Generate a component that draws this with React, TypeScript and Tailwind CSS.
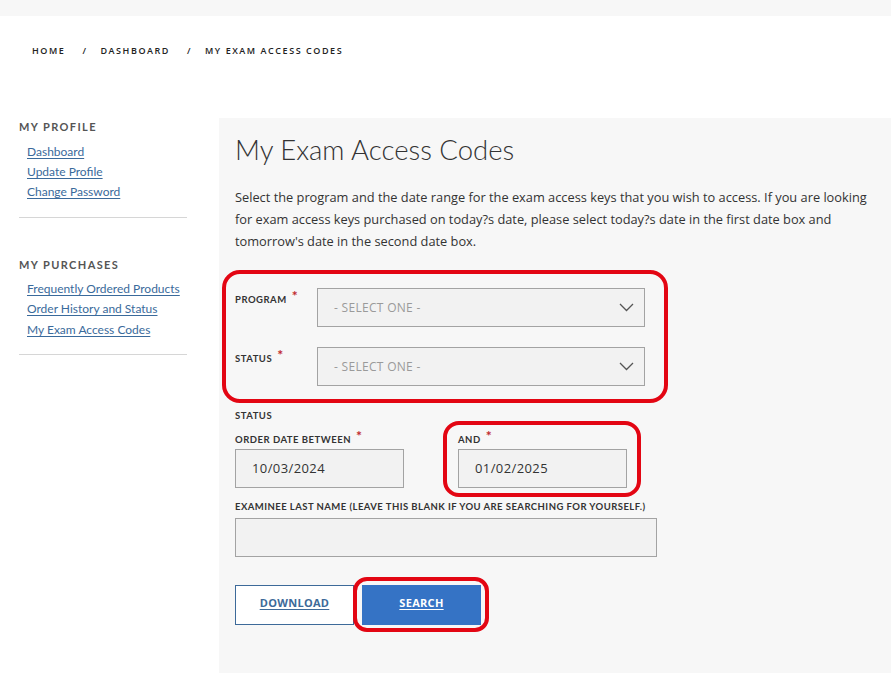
import React from "react";

const Chevron = () => (
  <svg width="15" height="9" viewBox="0 0 15 9" fill="none" className="shrink-0">
    <polyline points="1,1 7.5,7.5 14,1" stroke="#555" strokeWidth="1.3" fill="none" />
  </svg>
);

const Req = () => <span className="ml-[5px] relative -top-[2px] text-[14px] text-[#c0282d]">*</span>;

const Label = ({ children, req }: { children: React.ReactNode; req?: boolean }) => (
  <div className="h-[14px] leading-[14px] text-[9.5px] font-bold tracking-[0.5px] text-[#333] whitespace-nowrap" style={{ fontFamily: "Lato, sans-serif" }}>
    {children}
    {req && <Req />}
  </div>
);

const SelectBox = () => (
  <div className="w-[328px] h-[39px] bg-[#f2f2f2] border border-[#a3a3a3] flex items-center justify-between pl-[16px] pr-[10px]">
    <span className="text-[12px] tracking-[0.3px] text-[#9a9a9a]" style={{ fontFamily: '"Open Sans", sans-serif' }}>- SELECT ONE -</span>
    <Chevron />
  </div>
);

const DateBox = ({ value }: { value: string }) => (
  <div className="w-[169px] h-[39px] bg-[#f2f2f2] border border-[#a3a3a3] flex items-center pl-[16px]">
    <span className="text-[13px] tracking-[0.4px] text-[#333]" style={{ fontFamily: '"Open Sans", sans-serif' }}>{value}</span>
  </div>
);

const SideLink = ({ children }: { children: React.ReactNode }) => (
  <a href="#" className="block h-[20px] leading-[20px] text-[12px] text-[#3a6a9b] underline underline-offset-2">{children}</a>
);

export default function App() {
  return (
    <div className="min-h-[693px] bg-white" style={{ fontFamily: '"Open Sans", sans-serif' }}>
      <div className="h-[16px] bg-[#f7f7f7]" />
      <div className="h-[102px] pt-[28px] pl-[32px]">
        <div className="flex items-center h-[14px] text-[9px] font-semibold tracking-[1.55px] text-[#222]" style={{ fontFamily: '"Open Sans", sans-serif' }}>
          <span>HOME</span>
          <span className="ml-[17px] mr-[13px]">/</span>
          <span>DASHBOARD</span>
          <span className="ml-[17px] mr-[13px]">/</span>
          <span>MY EXAM ACCESS CODES</span>
        </div>
      </div>
      <div className="flex">
        <aside className="w-[219px] shrink-0 pl-[19px] pt-[2px]" style={{ fontFamily: "Lato, sans-serif" }}>
          <div className="w-[168px]">
            <div className="h-[14px] leading-[14px] text-[11px] font-bold tracking-[1.4px] text-[#555]">MY PROFILE</div>
            <div className="mt-[8px] pl-[8px]">
              <SideLink>Dashboard</SideLink>
              <SideLink>Update Profile</SideLink>
              <SideLink>Change Password</SideLink>
            </div>
            <div className="mt-[15px] border-t border-[#d6d6d6]" />
            <div className="mt-[40px] h-[14px] leading-[14px] text-[11px] font-bold tracking-[1.4px] text-[#555]">MY PURCHASES</div>
            <div className="mt-[7px] pl-[8px]">
              <SideLink>Frequently Ordered Products</SideLink>
              <SideLink>Order History and Status</SideLink>
              <div className="mt-[1px]"><SideLink>My Exam Access Codes</SideLink></div>
            </div>
            <div className="mt-[14px] border-t border-[#d6d6d6]" />
          </div>
        </aside>
        <main className="flex-1 bg-[#f7f7f7] pl-[16px] pt-[16px] pb-[48px]">
          <h1 className="h-[32px] leading-[32px] text-[27.5px] font-light text-[#333]" style={{ fontFamily: "Lato, sans-serif" }}>My Exam Access Codes</h1>
          <p className="mt-[20px] w-[645px] text-[12.8px] leading-[22px] text-[#333]">
            Select the program and the date range for the exam access keys that you wish to access. If you are looking for exam access keys purchased on today?s date, please select today?s date in the first date box and tomorrow's date in the second date box.
          </p>

          <div className="relative mt-[36px] w-[410px]">
            <div className="absolute -left-[13px] -top-[18px] -right-[23px] -bottom-[17px] rounded-[18px] border-[4px] border-[#e30613] pointer-events-none" />
            <div className="flex items-start">
              <div className="w-[82px] pt-[3px]"><Label req>PROGRAM</Label></div>
              <SelectBox />
            </div>
            <div className="flex items-start mt-[20px]">
              <div className="w-[82px] pt-[3px]"><Label req>STATUS</Label></div>
              <SelectBox />
            </div>
          </div>

          <div className="mt-[23px]"><Label>STATUS</Label></div>

          <div className="mt-[8px] flex gap-[54px]">
            <div>
              <Label req>ORDER DATE BETWEEN</Label>
              <div className="mt-[4px]"><DateBox value="10/03/2024" /></div>
            </div>
            <div className="relative">
              <div className="absolute -left-[15px] -top-[10px] -right-[14px] -bottom-[9px] rounded-[16px] border-[4px] border-[#e30613] pointer-events-none" />
              <Label req>AND</Label>
              <div className="mt-[4px]"><DateBox value="01/02/2025" /></div>
            </div>
          </div>

          <div className="mt-[12px]">
            <div className="h-[14px] leading-[14px] text-[9.5px] font-bold tracking-[0.45px] text-[#333] whitespace-nowrap" style={{ fontFamily: "Lato, sans-serif" }}>
              EXAMINEE LAST NAME (LEAVE THIS BLANK IF YOU ARE SEARCHING FOR YOURSELF.)
            </div>
          </div>
          <div className="mt-[4px] w-[422px] h-[39px] bg-[#f2f2f2] border border-[#a3a3a3]" />

          <div className="mt-[28px] flex gap-[8px]">
            <button className="w-[119px] h-[40px] pb-[3px] bg-white border border-[#3d6a99] text-[11px] font-bold text-[#3d6a99] underline underline-offset-2 tracking-[0.3px]" style={{ fontFamily: '"Open Sans", sans-serif' }}>DOWNLOAD</button>
            <div className="relative">
              <div className="absolute -left-[9px] -top-[8px] -right-[8px] -bottom-[7px] rounded-[14px] border-[4px] border-[#e30613] pointer-events-none" />
              <button className="w-[119px] h-[40px] pb-[3px] bg-[#3573c5] text-[11px] font-bold text-white underline underline-offset-2 tracking-[0.3px]" style={{ fontFamily: '"Open Sans", sans-serif' }}>SEARCH</button>
            </div>
          </div>
        </main>
      </div>
    </div>
  );
}
